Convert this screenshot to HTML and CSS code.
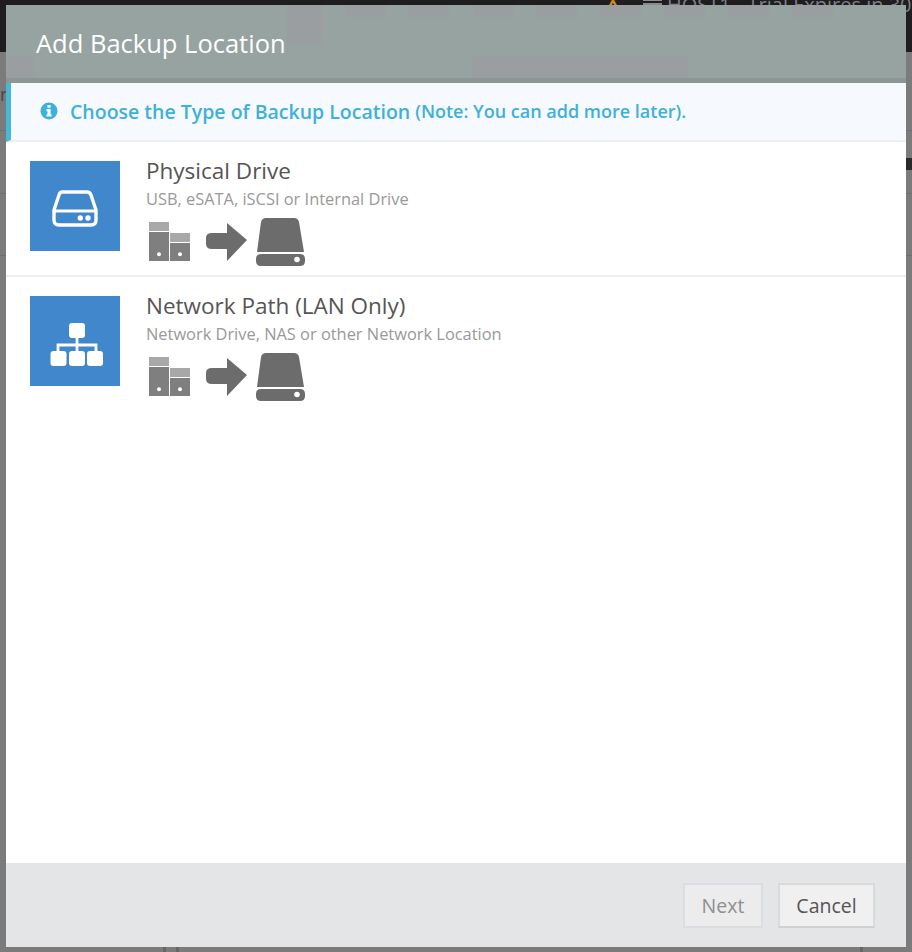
FILE: index.html
```html
<!DOCTYPE html>
<html lang="en">
<head>
<meta charset="utf-8">
<title>Add Backup Location</title>
<link rel="stylesheet" href="styles.css">
</head>
<body>
<div class="backdrop">
  <div class="backdrop-bar">
    <svg class="backdrop-warn" viewBox="0 0 16 14" width="16" height="14" aria-hidden="true"><path fill="none" stroke="#c98a1e" stroke-width="2.500" stroke-linejoin="round" d="M8 1.500l6.500 11.500H1.500z"/></svg>
    <div class="backdrop-list"></div>
    <span class="backdrop-host">HOST1 - Trial Expires in 30</span>
  </div>
  <span class="backdrop-letter">r</span>
  <div class="backdrop-line line-a"></div>
  <div class="backdrop-line line-b"></div>
  <div class="backdrop-line line-c"></div>
  <div class="backdrop-mark"></div>
  <div class="backdrop-post post-a"></div>
  <div class="backdrop-post post-b"></div>
  <div class="backdrop-post post-c"></div>
</div>
<main class="modal">
  <header class="modal-header">
    <div class="patch patch-1"></div>
    <div class="patch patch-2"></div>
    <div class="patch patch-3"></div>
    <div class="patch patch-4"></div>
    <div class="patch patch-5"></div>
    <div class="patch patch-6"></div>
    <div class="patch patch-7"></div>
    <div class="patch patch-8"></div>
    <div class="patch patch-11"></div>
    <div class="patch patch-9"></div>
    <div class="patch patch-10"></div>
    <h1 class="modal-title">Add Backup Location</h1>
  </header>
  <div class="alert">
    <svg class="alert-icon" viewBox="0 0 18 18" width="18" height="18" aria-hidden="true">
      <path fill="#3fb0da" fill-rule="evenodd" d="M9 .5a8.500 8.500 0 1 0 0 17 8.500 8.500 0 0 0 0-17zM7.400 3h3.200v2.700H7.400zM6.500 7h4.100v5.300h1v2.300H6.500v-2.300h1V9.300h-1z"/>
    </svg>
    <span class="alert-main">Choose the Type of Backup Location</span>
    <span class="alert-note">(Note: You can add more later).</span>
  </div>
  <div class="modal-body">
    <section class="option">
      <div class="tile">
        <svg class="tile-drive" viewBox="0 0 46 37" width="46" height="37" aria-hidden="true">
          <path fill="none" stroke="#fff" stroke-width="3.400" stroke-linejoin="round" d="M10 2h25q3 0 4 3l5 15v10q0 5-5 5H7q-5 0-5-5V20L7 5q1-3 3-3z"/>
          <path fill="none" stroke="#fff" stroke-width="3.200" d="M2 21h42"/>
          <circle cx="28.300" cy="28" r="2.700" fill="#fff"/><circle cx="36" cy="28" r="2.700" fill="#fff"/>
        </svg>
      </div>
      <div class="option-text">
        <h2 class="option-title">Physical Drive</h2>
        <p class="option-desc">USB, eSATA, iSCSI or Internal Drive</p>
        <svg class="flow" viewBox="0 0 160 48" width="160" height="48" aria-hidden="true">
          <path fill="#a8a8a8" d="M2 4h20v9H2zM23 15h20v9H23z"/>
          <path fill="#7f7f7f" fill-rule="evenodd" d="M2 14h20v29H2zM10 36.200a2 2 0 1 0 4 0 2 2 0 0 0-4 0zM23 25h20v18H23zM31 36.200a2 2 0 1 0 4 0 2 2 0 0 0-4 0z"/>
          <path fill="#6c6c6c" d="M80 5l20 17-20 21V31H65q-6 0-6-5v-6q0-5 6-5h15z"/>
          <path fill="#6c6c6c" d="M119 0h28q4 0 5 4l5 30h-47l4-30q1-4 5-4z"/>
          <path fill="#6c6c6c" fill-rule="evenodd" d="M114 36h39q5 0 5 5v2q0 5-5 5h-39q-5 0-5-5v-2q0-5 5-5zM147.200 41.500a2.800 2.800 0 1 0 5.600 0 2.800 2.800 0 0 0-5.600 0z"/>
        </svg>
      </div>
    </section>
    <section class="option">
      <div class="tile">
        <svg class="tile-net" viewBox="0 0 54 45" width="54" height="45" aria-hidden="true">
          <rect x="19" y="1" width="16" height="15" rx="3" fill="#fff"/>
          <rect x=".5" y="29" width="16" height="15" rx="3" fill="#fff"/>
          <rect x="19" y="29" width="16" height="15" rx="3" fill="#fff"/>
          <rect x="37" y="29" width="16" height="15" rx="3" fill="#fff"/>
          <path fill="none" stroke="#fff" stroke-width="2.800" d="M27 15v15M8 30v-7h38v7"/>
        </svg>
      </div>
      <div class="option-text">
        <h2 class="option-title">Network Path (LAN Only)</h2>
        <p class="option-desc">Network Drive, NAS or other Network Location</p>
        <svg class="flow" viewBox="0 0 160 48" width="160" height="48" aria-hidden="true">
          <path fill="#a8a8a8" d="M2 4h20v9H2zM23 15h20v9H23z"/>
          <path fill="#7f7f7f" fill-rule="evenodd" d="M2 14h20v29H2zM10 36.200a2 2 0 1 0 4 0 2 2 0 0 0-4 0zM23 25h20v18H23zM31 36.200a2 2 0 1 0 4 0 2 2 0 0 0-4 0z"/>
          <path fill="#6c6c6c" d="M80 5l20 17-20 21V31H65q-6 0-6-5v-6q0-5 6-5h15z"/>
          <path fill="#6c6c6c" d="M119 0h28q4 0 5 4l5 30h-47l4-30q1-4 5-4z"/>
          <path fill="#6c6c6c" fill-rule="evenodd" d="M114 36h39q5 0 5 5v2q0 5-5 5h-39q-5 0-5-5v-2q0-5 5-5zM147.200 41.500a2.800 2.800 0 1 0 5.600 0 2.800 2.800 0 0 0-5.600 0z"/>
        </svg>
      </div>
    </section>
  </div>
  <footer class="modal-footer">
    <button class="btn btn-next" type="button" disabled>Next</button>
    <button class="btn btn-cancel" type="button">Cancel</button>
  </footer>
</main>
</body>
</html>
```
FILE: styles.css
```css
* { box-sizing: border-box; }
html, body { height: 100%; }
body {
  margin: 0;
  padding: 5px 6px;
  background: #7b7b7b;
  font-family: "Open Sans", "Liberation Sans", sans-serif;
  overflow: hidden;
}
.backdrop-bar {
  position: absolute;
  left: 0; top: 0; right: 0;
  height: 52px;
  background: #1e1e1e;
  overflow: hidden;
}
.backdrop-warn { position: absolute; left: 605px; top: -1px; }
.backdrop-list {
  position: absolute;
  left: 643px;
  top: -1px;
  width: 19px;
  height: 6px;
  border-top: 2px solid #8a8a8a;
  border-bottom: 2px solid #8a8a8a;
}
.backdrop-host {
  position: absolute;
  left: 667px;
  top: -9px;
  color: #7f7f8c;
  font-size: 20px;
  white-space: nowrap;
}
.backdrop-letter {
  position: absolute;
  left: 0;
  top: 82px;
  color: #444;
  font-size: 18px;
}
.backdrop-line { position: absolute; left: 0; right: 0; background: #6f6f6f; height: 1px; }
.line-a { top: 130px; }
.line-b { top: 193px; }
.line-c { top: 255px; }
.backdrop-mark {
  position: absolute;
  right: 0;
  top: 158px;
  width: 6px;
  height: 12px;
  background: #2a2a2a;
}
.backdrop-post { position: absolute; bottom: 0; width: 3px; height: 5px; background: #666; }
.post-a { left: 163px; }
.post-b { left: 176px; }
.post-c { left: 860px; }
.modal {
  position: relative;
  height: 942px;
  background: #fff;
  display: flex;
  flex-direction: column;
}
.modal-header {
  position: relative;
  height: 78px;
  flex: none;
  padding: 18px 30px 0;
  background: #97a3a1;
  border-bottom: 5px solid #8c9695;
}
.patch { position: absolute; background: #9a9ea1; }
.patch-1 { left: 281px; top: 0; width: 35px; height: 38px; }
.patch-2 { left: 339px; top: 0; width: 41px; height: 12px; }
.patch-3 { left: 402px; top: 0; width: 41px; height: 12px; }
.patch-4 { left: 467px; top: 0; width: 41px; height: 12px; }
.patch-5 { left: 530px; top: 0; width: 41px; height: 12px; }
.patch-6 { left: 594px; top: 0; width: 41px; height: 12px; }
.patch-7 { left: 658px; top: 0; width: 41px; height: 12px; }
.patch-8 { left: 722px; top: 0; width: 41px; height: 12px; }
.patch-11 { left: 786px; top: 0; width: 41px; height: 12px; }
.patch-9 { left: 466px; top: 51px; width: 216px; height: 22px; }
.patch-10 { left: 0; top: 51px; width: 27px; height: 22px; }
.modal-title {
  position: relative;
  margin: 0;
  color: #fff;
  font-size: 25.5px;
  font-weight: 400;
  line-height: 40px;
}
.alert {
  flex: none;
  height: 59px;
  display: flex;
  align-items: center;
  padding: 0 0 1px 29px;
  background: #f6fafe;
  border-left: 5px solid #46b8da;
  border-bottom: 2px solid #eee;
  color: #3fb0da;
  white-space: nowrap;
}
.alert-icon { flex: none; margin-right: 12px; }
.alert-main { font-size: 19.5px; font-weight: 600; }
.alert-note { font-size: 18px; font-weight: 600; margin-left: 5px; }
.modal-body { flex: 1; }
.option {
  display: flex;
  height: 135px;
  padding: 19px 24px 0;
  border-bottom: 2px solid #eee;
}
.option:last-child { border-bottom: 0; }
.tile {
  width: 90px;
  height: 90px;
  flex: none;
  display: flex;
  align-items: center;
  justify-content: center;
  background: #4087cb;
}
.tile-drive { margin-top: 5px; }
.tile-net { margin: 6px 0 0 3px; }
.option-text { margin-left: 26px; }
.option-title {
  margin: -3px 0 0;
  color: #555;
  font-size: 22.5px;
  font-weight: 400;
  line-height: 26px;
}
.option-desc {
  margin: 5px 0 0;
  color: #999;
  font-size: 16.4px;
  line-height: 20px;
}
.flow { display: block; margin: 9px 0 0 1px; }
.modal-footer {
  flex: none;
  height: 84px;
  display: flex;
  justify-content: flex-end;
  align-items: flex-start;
  gap: 15px;
  padding: 20px 31px 0 0;
  background: #e4e5e7;
}
.btn {
  height: 45px;
  padding: 0;
  color: #555;
  font-family: inherit;
  font-size: 19.5px;
  background: #f0f0f1;
  border: 2px solid #d9dadc;
  border-bottom-color: #cfd0d2;
}
.btn-next {
  width: 80px;
  color: #8f8f8f;
  background: #ececed;
  border-color: #dcdde0;
}
.btn-cancel { width: 97px; }
```
